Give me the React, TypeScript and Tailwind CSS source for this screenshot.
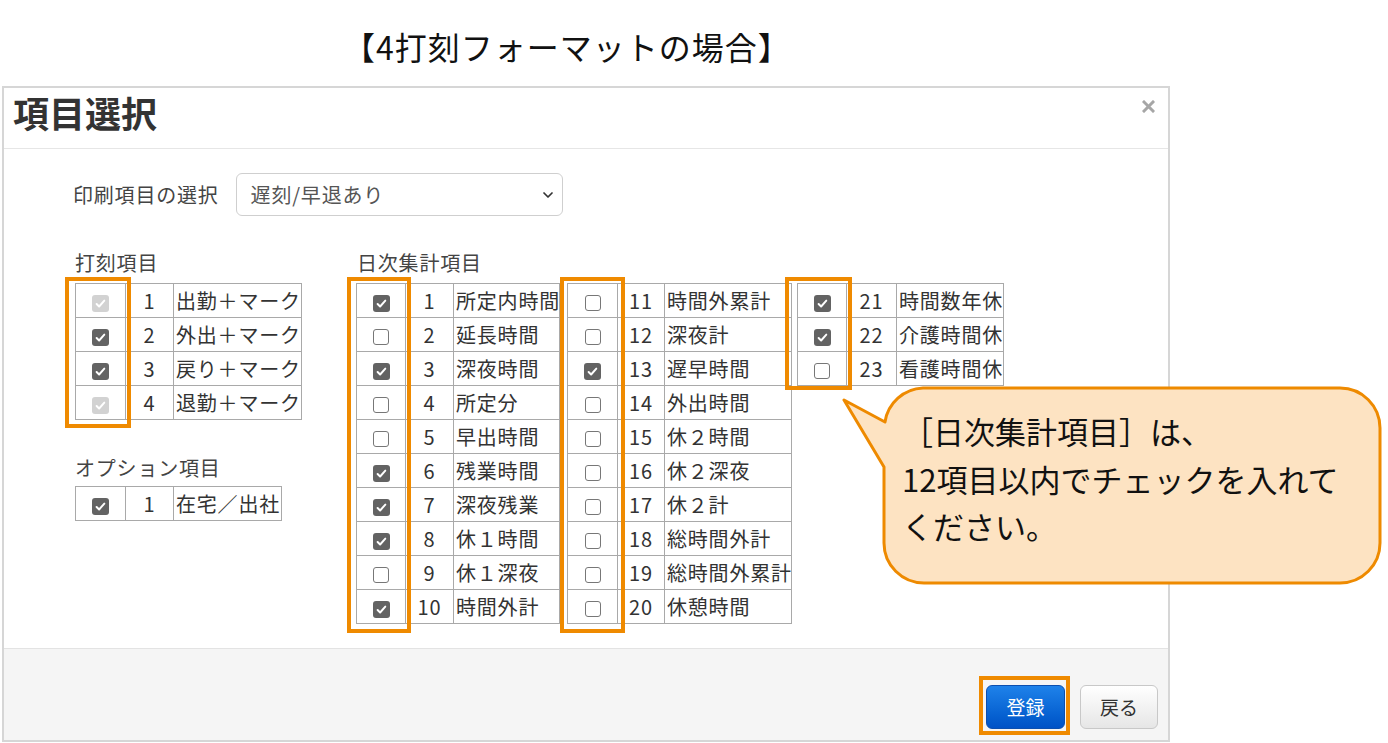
import React from 'react';
import { ChevronDown } from 'lucide-react';

type Mark = 'on' | 'off' | 'dis';
type Row = [Mark, number, string];

const stampRows: Row[] = [
  ['dis', 1, '出勤＋マーク'],
  ['on', 2, '外出＋マーク'],
  ['on', 3, '戻り＋マーク'],
  ['dis', 4, '退勤＋マーク'],
];

const optionRows: Row[] = [['on', 1, '在宅／出社']];

const dailyA: Row[] = [
  ['on', 1, '所定内時間'],
  ['off', 2, '延長時間'],
  ['on', 3, '深夜時間'],
  ['off', 4, '所定分'],
  ['off', 5, '早出時間'],
  ['on', 6, '残業時間'],
  ['on', 7, '深夜残業'],
  ['on', 8, '休１時間'],
  ['off', 9, '休１深夜'],
  ['on', 10, '時間外計'],
];

const dailyB: Row[] = [
  ['off', 11, '時間外累計'],
  ['off', 12, '深夜計'],
  ['on', 13, '遅早時間'],
  ['off', 14, '外出時間'],
  ['off', 15, '休２時間'],
  ['off', 16, '休２深夜'],
  ['off', 17, '休２計'],
  ['off', 18, '総時間外計'],
  ['off', 19, '総時間外累計'],
  ['off', 20, '休憩時間'],
];

const dailyC: Row[] = [
  ['on', 21, '時間数年休'],
  ['on', 22, '介護時間休'],
  ['off', 23, '看護時間休'],
];

// チェックボックス（チェック済み / 未チェック / 無効）
const CheckMark: React.FC<{ mark: Mark }> = ({ mark }) => {
  if (mark === 'off') {
    return <span className="block w-[16px] h-[16px] rounded-[3px] border-[1.5px] border-[#777] bg-white" />;
  }
  return (
    <span
      className={
        mark === 'on'
          ? 'flex items-center justify-center w-[17px] h-[17px] rounded-[3px] bg-[#636363]'
          : 'flex items-center justify-center w-[17px] h-[17px] rounded-[3px] bg-[#d2d2d2]'
      }
    >
      <svg width="13" height="13" viewBox="0 0 16 16">
        <path
          d="M3.2 8.6l3.1 3.1 6.4-7.2"
          fill="none"
          stroke="white"
          strokeWidth="2.4"
          strokeLinecap="round"
          strokeLinejoin="round"
        />
      </svg>
    </span>
  );
};

interface ItemTableProps {
  rows: Row[];
  cols: [string, string, string];
  highlight?: string;
}

// 項目テーブル：チェック列 / 番号列 / 名称列
const ItemTable: React.FC<ItemTableProps> = ({ rows, cols, highlight }) => (
  <div className="relative w-fit">
    <div className="w-fit border-t border-l border-[#a9a9a9]">
      {rows.map(([mark, no, label]) => (
        <div key={no} className="flex h-[34px]">
          <div className={`${cols[0]} flex justify-center pt-[11px] border-r border-b border-[#a9a9a9]`}>
            <CheckMark mark={mark} />
          </div>
          <div className={`${cols[1]} flex items-center justify-center border-r border-b border-[#a9a9a9]`}>
            {no}
          </div>
          <div className={`${cols[2]} flex items-center pl-[2px] overflow-hidden whitespace-nowrap border-r border-b border-[#a9a9a9]`}>
            {label}
          </div>
        </div>
      ))}
    </div>
    {/* 注記用のオレンジ枠 */}
    {highlight && <div className={`absolute border-4 border-[#ef8a00] pointer-events-none ${highlight}`} />}
  </div>
);

const Callout: React.FC = () => (
  <div className="absolute left-[840px] top-[383px] w-[545px] h-[205px]">
    <svg width="545" height="205" viewBox="0 0 545 205" className="absolute inset-0">
      <path
        d="M44 84 L4 17 L45 39 A40 40 0 0 1 83 5 L500 5 A40 40 0 0 1 540 45 L540 160 A40 40 0 0 1 500 200 L84 200 A40 40 0 0 1 44 160 Z"
        fill="#fde3c2"
        stroke="#ee8a00"
        strokeWidth="3"
        strokeLinejoin="round"
      />
    </svg>
    <div className="absolute left-[62px] top-[24px] text-[31px] leading-[47.5px] text-[#111] whitespace-nowrap">
      <div>［日次集計項目］は、</div>
      <div>12項目以内でチェックを入れて</div>
      <div>ください。</div>
    </div>
  </div>
);

export default function App() {
  return (
    <div
      className="relative w-[1388px] h-[743px] overflow-hidden bg-white text-[#333]"
      style={{ fontFamily: '"Noto Sans CJK JP", "Noto Sans", sans-serif' }}
    >
      {/* 見出し */}
      <div className="h-[86px] pl-[343px] pt-[26px] text-[32px] leading-[40px] tracking-[1px] text-[#111]">
        【4打刻フォーマットの場合】
      </div>

      {/* モーダル */}
      <div className="ml-[2px] w-[1168px] h-[656px] border-2 border-[#d6d6d6] flex flex-col">
        <div className="relative h-[61px] border-b border-[#e6e6e6] px-[9px] pt-[2px]">
          <h1 className="text-[36px] leading-[44px] font-bold text-[#333]">項目選択</h1>
          <svg
            width="13"
            height="13"
            viewBox="0 0 13 13"
            className="absolute right-[13px] top-[12px]"
          >
            <path d="M2 2 L11 11 M11 2 L2 11" stroke="#a6a6a6" strokeWidth="3" strokeLinecap="square" />
          </svg>
        </div>

        <div className="flex-1 pl-[71px] pt-[24px] text-[20px] tracking-[0.8px]">
          <div className="flex items-center gap-[17px] -ml-[2px]">
            <span className="text-[#444]">印刷項目の選択</span>
            <div className="flex items-center justify-between w-[327px] h-[43px] rounded-[6px] border border-[#cfcfcf] pl-[14px] pr-[6px] text-[#555]">
              <span>遅刻/早退あり</span>
              <ChevronDown size={16} strokeWidth={2.6} className="text-[#333]" />
            </div>
          </div>

          <div className="flex mt-[35px]">
            <div className="w-[281px]">
              <div className="h-[24px] leading-[24px] mb-[8px] text-[#444]">打刻項目</div>
              <ItemTable
                rows={stampRows}
                cols={['w-[50px]', 'w-[48px]', 'w-[128px]']}
                highlight="-left-[10px] -top-[6px] w-[66px] h-[151px]"
              />
              <div className="h-[24px] leading-[24px] mt-[36px] mb-[6px] text-[#444]">オプション項目</div>
              <ItemTable rows={optionRows} cols={['w-[50px]', 'w-[48px]', 'w-[108px]']} />
            </div>

            <div>
              <div className="h-[24px] leading-[24px] mb-[8px] pl-[1px] text-[#444]">日次集計項目</div>
              <div className="flex items-start">
                <ItemTable
                  rows={dailyA}
                  cols={['w-[49px]', 'w-[48px]', 'w-[106px]']}
                  highlight="-left-[9px] -top-[6px] w-[64px] h-[356px]"
                />
                <div className="w-[7px]" />
                <ItemTable
                  rows={dailyB}
                  cols={['w-[50px]', 'w-[47px]', 'w-[127px]']}
                  highlight="-left-[7px] -top-[6px] w-[65px] h-[356px]"
                />
                <div className="w-[5px]" />
                <ItemTable
                  rows={dailyC}
                  cols={['w-[49px]', 'w-[50px]', 'w-[107px]']}
                  highlight="-left-[12px] -top-[6px] w-[67px] h-[113px]"
                />
              </div>
            </div>
          </div>
        </div>

        <div className="h-[92px] border-t border-[#e3e3e3] bg-[#f5f5f5] flex justify-end items-start pt-[36px] pr-[10px] gap-[15px]">
          <div className="relative">
            <button className="w-[79px] h-[44px] rounded-[6px] border border-[#0b4fb0] bg-gradient-to-b from-[#1e82ea] to-[#0052c6] text-white text-[19px]">
              登録
            </button>
            <div className="absolute -left-[7px] -right-[5px] -top-[9px] -bottom-[6px] border-4 border-[#ef8a00] pointer-events-none" />
          </div>
          <button className="w-[78px] h-[44px] rounded-[6px] border border-[#c8c8c8] bg-gradient-to-b from-white to-[#e6e6e6] text-[#333] text-[19px]">
            戻る
          </button>
        </div>
      </div>

      <Callout />
    </div>
  );
}
